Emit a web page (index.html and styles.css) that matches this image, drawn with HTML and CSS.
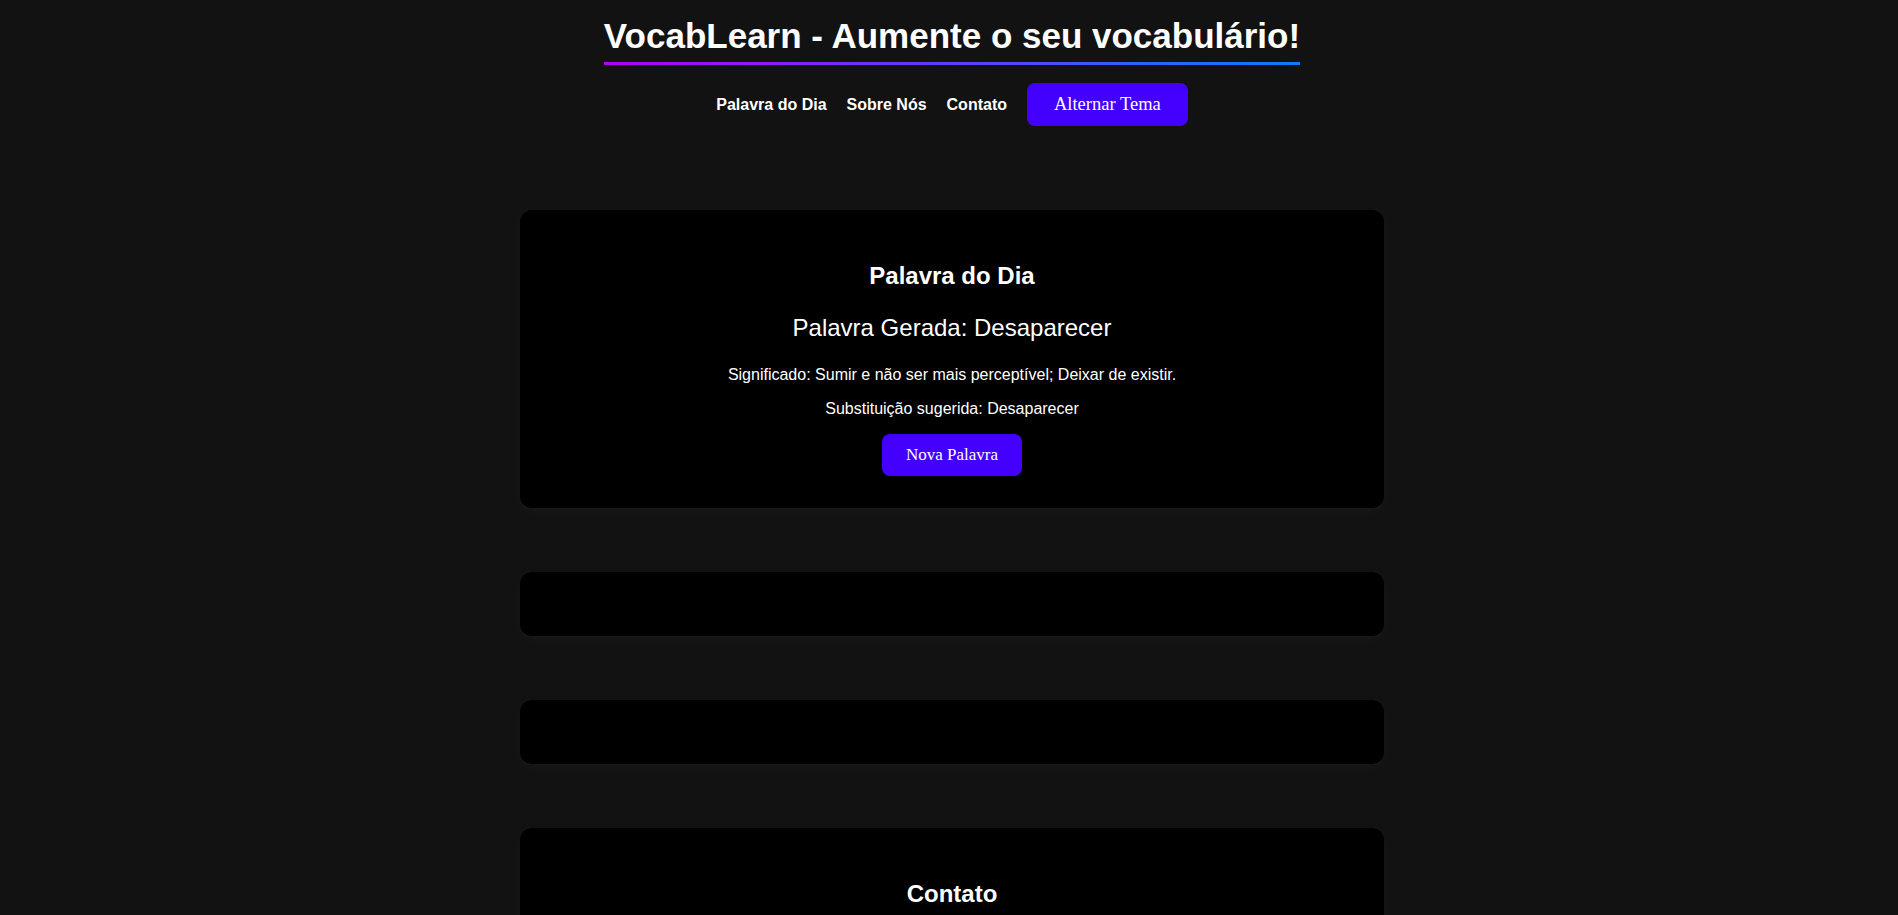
FILE: index.html
```html
<!DOCTYPE html>
<html lang="pt-BR">
<head>
<meta charset="UTF-8">
<title>VocabLearn</title>
<link rel="stylesheet" href="styles.css">
</head>
<body>
<header class="site-header">
  <h1 class="site-title">VocabLearn - Aumente o seu vocabulário!</h1>
  <nav class="site-nav">
    <a href="#palavra" class="nav-link">Palavra do Dia</a>
    <a href="#sobre" class="nav-link">Sobre Nós</a>
    <a href="#contato" class="nav-link">Contato</a>
    <button class="btn btn-theme" type="button">Alternar Tema</button>
  </nav>
</header>
<main class="content">
  <section class="card" id="palavra">
    <h2 class="card-title">Palavra do Dia</h2>
    <p class="word">Palavra Gerada: Desaparecer</p>
    <p class="meaning">Significado: Sumir e não ser mais perceptível; Deixar de existir.</p>
    <p class="suggestion">Substituição sugerida: Desaparecer</p>
    <div class="card-actions">
      <button class="btn btn-word" type="button">Nova Palavra</button>
    </div>
  </section>
  <section class="card" id="sobre"></section>
  <section class="card" id="extra"></section>
  <section class="card" id="contato">
    <h2 class="card-title">Contato</h2>
    <p class="meaning">Entre em contato conosco pelo e-mail contato@vocablearn.com</p>
  </section>
</main>
</body>
</html>
```
FILE: styles.css
```css
* {
  box-sizing: content-box;
}

body {
  margin: 0;
  padding: 0 0 0 6px;
  background: #121212;
  color: #ffffff;
  font-family: "Liberation Sans", Arial, sans-serif;
}

.site-header {
  text-align: center;
  padding-top: 16px;
}

.site-title {
  display: inline-block;
  margin: 0;
  font-size: 35px;
  line-height: 40px;
  font-weight: bold;
  padding-bottom: 6px;
  border-bottom: 3px solid transparent;
  border-image: linear-gradient(to right, #b000f5, #0a7cff) 1;
}

.site-nav {
  display: flex;
  justify-content: center;
  align-items: center;
  gap: 20px;
  margin-top: 18px;
}

.nav-link {
  color: #ffffff;
  text-decoration: none;
  font-weight: bold;
  font-size: 16px;
}

.btn {
  border: none;
  background: #4400ff;
  color: #ffffff;
  font-family: "Liberation Serif", "Times New Roman", serif;
  line-height: normal;
  border-radius: 8px;
  cursor: pointer;
}

.btn-theme {
  font-size: 18.5px;
  padding: 11px 27px;
}

.btn-word {
  font-size: 17px;
  padding: 11px 24px;
}

.content {
  display: flex;
  flex-direction: column;
  align-items: center;
  gap: 64px;
  padding-top: 84px;
  padding-bottom: 64px;
}

.card {
  width: 800px;
  padding: 32px;
  background: #000000;
  border-radius: 12px;
  text-align: center;
  box-shadow: 0 4px 14px rgba(255, 255, 255, 0.035);
}

.card-title {
  font-size: 24px;
  margin: 20px 0;
}

.word {
  font-size: 24px;
  margin: 24px 0;
}

.meaning,
.suggestion {
  font-size: 16px;
  margin: 16px 0;
}

.card-actions {
  display: flex;
  justify-content: center;
}
```
